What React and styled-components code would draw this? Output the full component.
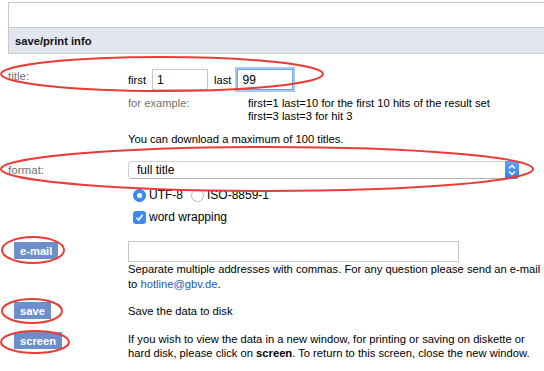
import React from 'react';
import styled, { createGlobalStyle } from 'styled-components';

const GlobalStyle = createGlobalStyle`
  html, body {
    margin: 0;
    padding: 0;
    background: #fff;
  }
  body {
    font-family: "Liberation Sans", Arial, Helvetica, sans-serif;
    font-size: 11.2px;
    color: #000;
  }
`;

const Page = styled.div`
  position: relative;
  width: 544px;
  height: 371px;
  overflow: hidden;
  padding: 2px 0 0 8px;
  box-sizing: border-box;
`;

const InfoBox = styled.div`
  width: 600px;
  border: 1px solid #c9c9c9;
  border-right: none;
`;

const BlankRow = styled.div`
  height: 24px;
`;

const HeaderRow = styled.div`
  height: 25px;
  display: flex;
  align-items: center;
  padding-left: 6px;
  border-top: 1px solid #c9c9c9;
  background: #e2e6ee;
  font-weight: bold;
  color: #111;
`;

const Row = styled.div`
  display: grid;
  grid-template-columns: 120px 1fr;
  align-items: ${(p) => p.$align || 'start'};
  margin-top: ${(p) => p.$top || 0}px;
`;

const Label = styled.div`
  color: #737373;
  line-height: 14px;
  font-size: 11.6px;
`;

const Inline = styled.div`
  display: flex;
  align-items: center;
  height: ${(p) => p.$h || 21}px;
`;

const Word = styled.span`
  margin-right: 6px;
  margin-left: ${(p) => p.$left || 0}px;
  line-height: 14px;
`;

const TextInput = styled.div`
  box-sizing: border-box;
  width: ${(p) => p.$w}px;
  height: 21px;
  border: 1px solid #c6c6c6;
  padding-left: 4px;
  display: flex;
  align-items: center;
  font-size: 12px;
  ${(p) =>
    p.$focus &&
    `
    border: 1px solid #6ea3ea;
    box-shadow: 0 0 0 2px #a9c8f3;
  `}
`;

const ExampleGrid = styled.div`
  display: grid;
  grid-template-columns: 120px 1fr;
  line-height: 13px;
`;

const Gray = styled.span`
  color: #737373;
`;

const Line = styled.div`
  line-height: ${(p) => p.$lh || 14}px;
  white-space: nowrap;
`;

const Select = styled.div`
  box-sizing: border-box;
  width: 391px;
  height: 18px;
  display: flex;
  align-items: center;
  border: 1px solid #cfcfcf;
  border-bottom-color: #b4b4b4;
  border-radius: 4px;
  padding-left: 8px;
  font-size: 12px;
  position: relative;
`;

const SelectArrow = styled.span`
  position: absolute;
  right: -1px;
  top: -1px;
  width: 14px;
  height: 18px;
  border-radius: 0 4px 4px 0;
  background: linear-gradient(#5ea4f8, #2e7ef0);
  display: flex;
  align-items: center;
  justify-content: center;
`;

const Choice = styled.label`
  display: inline-flex;
  align-items: center;
  margin-left: ${(p) => p.$left || 0}px;
  line-height: 14px;
  font-size: 12px;
`;

const Radio = styled.span`
  box-sizing: border-box;
  width: 13px;
  height: 13px;
  border-radius: 50%;
  margin-right: 3px;
  display: inline-flex;
  align-items: center;
  justify-content: center;
  background: ${(p) => (p.$on ? '#3b8bf2' : '#fff')};
  border: 1px solid ${(p) => (p.$on ? '#2f7de6' : '#b9b9b9')};
  &::after {
    content: '';
    display: ${(p) => (p.$on ? 'block' : 'none')};
    width: 5px;
    height: 5px;
    border-radius: 50%;
    background: #fff;
  }
`;

const Check = styled.span`
  width: 13px;
  height: 13px;
  border-radius: 3px;
  margin-right: 3px;
  background: #3b8bf2;
  display: inline-flex;
  align-items: center;
  justify-content: center;
`;

const ActionButton = styled.div`
  justify-self: start;
  margin-left: 6px;
  height: 17px;
  padding: 0 6px;
  display: flex;
  align-items: center;
  background: #6c8fcb;
  color: #fff;
  font-weight: bold;
  margin-top: ${(p) => p.$top || 0}px;
`;

const Link = styled.span`
  color: #2457b5;
`;

const Marks = styled.svg`
  position: absolute;
  left: 0;
  top: 0;
  pointer-events: none;
`;

const ellipses = [
  { cx: 162, cy: 74, rx: 161, ry: 17 },
  { cx: 267, cy: 169, rx: 266, ry: 22 },
  { cx: 33, cy: 250, rx: 31, ry: 13 },
  { cx: 32, cy: 311, rx: 30, ry: 12 },
  { cx: 35, cy: 342, rx: 34, ry: 11 },
];

export default function App() {
  return (
    <>
      <GlobalStyle />
      <Page>
        <InfoBox>
          <BlankRow />
          <HeaderRow>save/print info</HeaderRow>
        </InfoBox>

        <Row $top={15}>
          <Label>title:</Label>
          <Inline>
            <Word>first</Word>
            <TextInput $w={56}>1</TextInput>
            <Word $left={6}>last</Word>
            <TextInput $w={56} $focus>99</TextInput>
          </Inline>
        </Row>

        <Row $top={7}>
          <div />
          <div>
            <ExampleGrid>
              <Gray>for example:</Gray>
              <div>
                <div>first=1 last=10 for the first 10 hits of the result set</div>
                <div>first=3 last=3 for hit 3</div>
              </div>
            </ExampleGrid>
            <Line style={{ marginTop: 9 }}>You can download a maximum of 100 titles.</Line>
          </div>
        </Row>

        <Row $top={15} $align="center">
          <Label>format:</Label>
          <Select>
            full title
            <SelectArrow>
              <svg width="8" height="12" viewBox="0 0 8 12">
                <path d="M1 4.5 L4 1.5 L7 4.5 M1 7.5 L4 10.5 L7 7.5" fill="none" stroke="#fff" strokeWidth="1.5" />
              </svg>
            </SelectArrow>
          </Select>
        </Row>

        <Row $top={8}>
          <div />
          <Inline $h={16}>
            <Choice $left={5}>
              <Radio $on />
              UTF-8
            </Choice>
            <Choice $left={8}>
              <Radio />
              ISO-8859-1
            </Choice>
          </Inline>
        </Row>

        <Row $top={6}>
          <div />
          <Inline $h={16}>
            <Choice $left={5}>
              <Check>
                <svg width="9" height="9" viewBox="0 0 9 9">
                  <path d="M1.5 4.8 L3.6 7 L7.6 1.8" fill="none" stroke="#fff" strokeWidth="1.6" />
                </svg>
              </Check>
              word wrapping
            </Choice>
          </Inline>
        </Row>

        <Row $top={16}>
          <ActionButton $top={1}>e-mail</ActionButton>
          <div>
            <TextInput $w={331} />
            <Line $lh={15}>
              Separate multiple addresses with commas. For any question please send an e-mail
            </Line>
            <Line $lh={15}>
              to <Link>hotline@gbv.de</Link>.
            </Line>
          </div>
        </Row>

        <Row $top={10} $align="center">
          <ActionButton>save</ActionButton>
          <Line>Save the data to disk</Line>
        </Row>

        <Row $top={13}>
          <ActionButton>screen</ActionButton>
          <div>
            <Line>If you wish to view the data in a new window, for printing or saving on diskette or</Line>
            <Line>
              hard disk, please click on <b>screen</b>. To return to this screen, close the new window.
            </Line>
          </div>
        </Row>

        <Marks width="544" height="371" viewBox="0 0 544 371">
          {ellipses.map((e, i) => (
            <ellipse key={i} {...e} fill="none" stroke="#ec3b34" strokeWidth="2" />
          ))}
        </Marks>
      </Page>
    </>
  );
}
